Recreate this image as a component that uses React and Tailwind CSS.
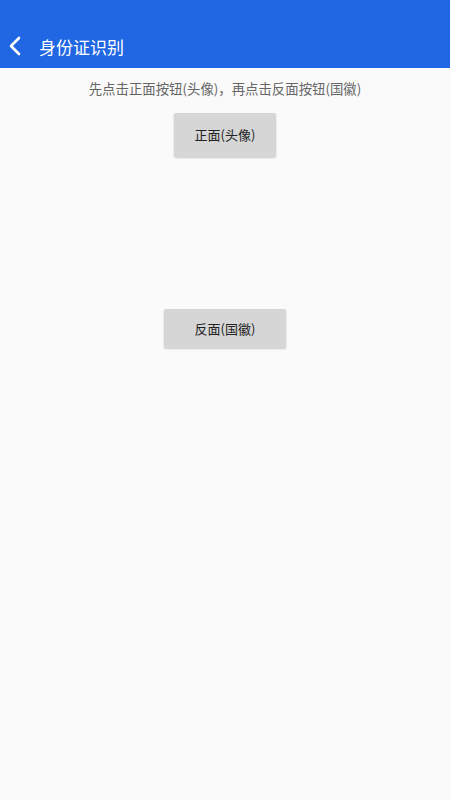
import React from 'react';

const font = { fontFamily: '"Noto Sans CJK SC", Roboto, sans-serif' };

const App = () => {
    return (
        <div className="w-[450px] h-[800px] bg-[#fafafa] flex flex-col" style={font}>
            <header className="h-[68px] bg-[#2166e3] flex items-end shrink-0">
                <div className="h-[44px] w-full flex items-center">
                    <svg className="ml-[8px] w-[14px] h-[20px]" viewBox="0 0 14 20" fill="none">
                        <path d="M11 2 L3 10 L11 18" stroke="white" strokeWidth="2.6" strokeLinecap="round" strokeLinejoin="round" />
                    </svg>
                    <h1 className="ml-[17px] text-[17px] text-white leading-none">身份证识别</h1>
                </div>
            </header>

            <p className="mt-[11px] text-center text-[13.4px] leading-[18px] text-[#666]">
                先点击正面按钮(头像)，再点击反面按钮(国徽)
            </p>

            <div className="mt-[16px] flex justify-center">
                <button className="w-[102px] h-[44px] bg-[#d6d6d6] rounded-[2px] shadow-[0_1px_2px_rgba(0,0,0,0.2)] text-[13px] text-[#222]">
                    正面(头像)
                </button>
            </div>

            <div className="mt-[152px] flex justify-center">
                <button className="w-[122px] h-[39px] bg-[#d6d6d6] rounded-[2px] shadow-[0_1px_2px_rgba(0,0,0,0.2)] text-[13px] text-[#222]">
                    反面(国徽)
                </button>
            </div>
        </div>
    );
};

export default App;
